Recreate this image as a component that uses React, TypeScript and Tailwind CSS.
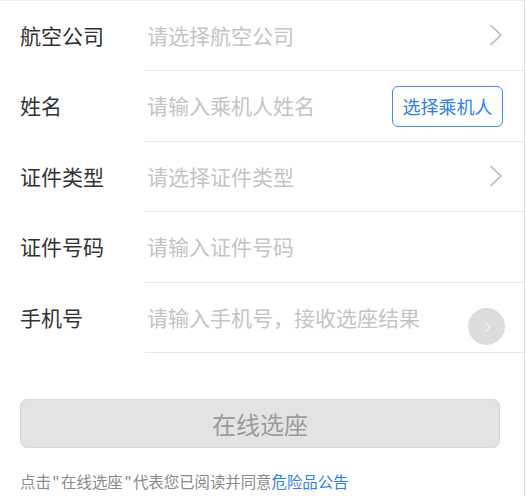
const font = { fontFamily: '"Noto Sans CJK SC", "Noto Sans", sans-serif' };

type Row = {
  label: string;
  placeholder: string;
  kind: "arrow" | "picker" | "none" | "phone";
  height: string;
};

const rows: Row[] = [
  { label: "航空公司", placeholder: "请选择航空公司", kind: "arrow", height: "h-[70px]" },
  { label: "姓名", placeholder: "请输入乘机人姓名", kind: "picker", height: "h-[71px]" },
  { label: "证件类型", placeholder: "请选择证件类型", kind: "arrow", height: "h-[70px]" },
  { label: "证件号码", placeholder: "请输入证件号码", kind: "none", height: "h-[71px]" },
  { label: "手机号", placeholder: "请输入手机号，接收选座结果", kind: "phone", height: "h-[70px]" },
];

const Chevron = ({ className }: { className?: string }) => (
  <svg
    viewBox="0 0 14 22"
    className={className}
    fill="none"
    stroke="currentColor"
    strokeWidth={2}
    strokeLinecap="round"
    strokeLinejoin="round"
  >
    <polyline points="2,1.5 12,11 2,20.5" />
  </svg>
);

const FormRow = ({ row }: { row: Row }) => {
  return (
    <div className={`flex ${row.height}`}>
      <div className="w-[145px] shrink-0 pl-5 flex items-center text-[21px] text-[#333] pb-[1px]">
        {row.label}
      </div>
      <div className="flex-1 flex items-center border-b border-[#e8e8e8] pl-[2px] pr-[21px]">
        <span className="flex-1 text-[21px] text-[#c4c4c4]">
          {row.placeholder}
        </span>
        {row.kind === "arrow" && (
          <Chevron className="w-[14px] h-[22px] text-[#c7c7c7] mb-[1px]" />
        )}
        {row.kind === "picker" && (
          <button className="h-[41px] w-[111px] rounded-[6px] border border-[#3a8cf3] text-[18px] text-[#2f7ff0] flex items-center justify-center">
            选择乘机人
          </button>
        )}
        {row.kind === "phone" && (
          <div className="w-[37px] h-[37px] -mr-[2px] mt-[18px] rounded-full bg-[#dcdcdc] flex items-center justify-center">
            <Chevron className="w-[7px] h-[12px] text-white ml-[1px]" />
          </div>
        )}
      </div>
    </div>
  );
};

const App = () => {
  return (
    <div className="w-[526px] h-[496px] bg-white overflow-hidden" style={font}>
      <div className="w-[525px] h-full border-r border-[#dedede] border-t border-t-[#eceff3]">
        {rows.map((row) => (
          <FormRow key={row.label} row={row} />
        ))}
        <div className="px-5 pt-[46px]">
          <button className="w-[480px] h-[49px] rounded-[7px] bg-[#e3e3e3] border border-[#dadada] text-[24px] text-[#9b9b9b] flex items-center justify-center">
            在线选座
          </button>
          <p className="mt-[23px] text-[15.4px] text-[#8a8a8a] leading-[20px] whitespace-nowrap">
            点击<span className="px-[1.5px]">"</span>在线选座<span className="px-[1.5px]">"</span>代表您已阅读并同意
            <span className="text-[#2f7ff0]">危险品公告</span>
          </p>
        </div>
      </div>
    </div>
  );
};

export default App;
